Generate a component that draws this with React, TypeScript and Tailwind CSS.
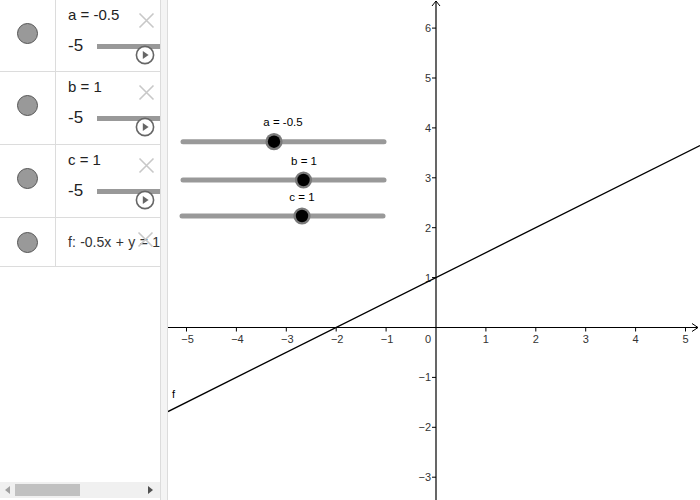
import React from 'react';

interface SliderRow {
  label: string;
  height: string;
}

const sliderRows: SliderRow[] = [
  { label: 'a = -0.5', height: 'h-[73px]' },
  { label: 'b = 1', height: 'h-[73px]' },
  { label: 'c = 1', height: 'h-[73px]' },
];

const UNIT = 49.9;
const OX = 436;
const OY = 327.5;

function Dot() {
  return <div className="w-[21px] h-[21px] rounded-full bg-[#999] border border-[#555]" />;
}

function CloseIcon() {
  return (
    <svg className="absolute right-[5px] top-[12px]" width="17" height="17" viewBox="0 0 17 17">
      <path d="M1.5 1.5 L15.5 15.5 M15.5 1.5 L1.5 15.5" stroke="#c8c8c8" strokeWidth="1.6" fill="none" />
    </svg>
  );
}

function PlayIcon() {
  return (
    <svg className="absolute right-[5px] top-[45px]" width="20" height="20" viewBox="0 0 20 20">
      <circle cx="10" cy="10" r="8.6" fill="white" stroke="#666" strokeWidth="1.6" />
      <path d="M7.8 6 L13.6 10 L7.8 14 Z" fill="#666" />
    </svg>
  );
}

function AlgebraPanel() {
  return (
    <div className="w-[160px] h-full flex flex-col bg-white overflow-hidden" style={{ fontFamily: '"Liberation Sans", Arial, sans-serif' }}>
      {sliderRows.map((row, i) => (
        <div key={row.label} className={`flex ${i === 0 ? 'h-[72px]' : row.height} border-b border-[#dcdcdc]`}>
          <div className="w-[56px] shrink-0 border-r border-[#dcdcdc] flex items-center justify-center pb-[5px]">
            <Dot />
          </div>
          <div className="relative flex-1 overflow-hidden pl-[12px] pt-[6px]">
            <div className="text-[15px] leading-[18px] text-[#222] whitespace-nowrap">{row.label}</div>
            <div className="flex items-center mt-[12px]">
              <span className="text-[17px] leading-[20px] text-[#222] w-[29px]">-5</span>
              <div className="h-[5px] flex-1 bg-[#999] -mr-[2px]" />
            </div>
            <CloseIcon />
            <PlayIcon />
          </div>
        </div>
      ))}
      <div className="flex h-[49px] border-b border-[#dcdcdc]">
        <div className="w-[56px] shrink-0 border-r border-[#dcdcdc] flex items-center justify-center">
          <Dot />
        </div>
        <div className="relative flex-1 overflow-hidden pl-[12px] flex items-center">
          <span className="text-[14px] text-[#333] whitespace-nowrap [word-spacing:0.5px]">f: -0.5x + y = 1</span>
          <svg className="absolute right-[6px] top-[13px]" width="17" height="17" viewBox="0 0 17 17">
            <path d="M1.5 1.5 L15.5 15.5 M15.5 1.5 L1.5 15.5" stroke="#c8c8c8" strokeWidth="1.6" fill="none" />
          </svg>
        </div>
      </div>
      <div className="flex-1" />
      <div className="h-[16px] mb-[2px] bg-[#f0f0f0] flex items-center px-[5px]">
        <svg width="5" height="8" viewBox="0 0 5 8"><path d="M5 0 L0 4 L5 8 Z" fill="#a0a0a0" /></svg>
        <div className="ml-[5px] w-[65px] h-[12px] bg-[#c1c1c1]" />
        <div className="flex-1" />
        <svg width="5" height="8" viewBox="0 0 5 8" className="mr-[2px]"><path d="M0 0 L5 4 L0 8 Z" fill="#505050" /></svg>
      </div>
    </div>
  );
}

function Knob({ x, y }: { x: number; y: number }) {
  return (
    <g>
      <circle cx={x} cy={y} r="8.6" fill="#7a7a7a" />
      <circle cx={x} cy={y} r="6.2" fill="#000" />
    </g>
  );
}

function Graphics() {
  const xs = [-5, -4, -3, -2, -1, 1, 2, 3, 4, 5];
  const ys = [-3, -2, -1, 1, 2, 3, 4, 5, 6];
  const lineY = (px: number) => OY - (0.5 * ((px - OX) / UNIT) + 1) * UNIT;
  const label = (n: number) => (n < 0 ? `\u2212${-n}` : `${n}`);

  return (
    <svg className="flex-1 h-full block" viewBox="168 0 532 500" style={{ fontFamily: '"Liberation Sans", Arial, sans-serif' }}>
      <rect x="168" y="0" width="532" height="500" fill="white" />
      {/* axes */}
      <line x1="168" y1={OY} x2="698" y2={OY} stroke="#000" strokeWidth="1.2" />
      <path d="M692 323.5 L698 327.5 L692 331.5" stroke="#000" strokeWidth="1" fill="none" />
      <line x1={OX} y1="500" x2={OX} y2="1" stroke="#000" strokeWidth="1.2" />
      <path d="M432 6 L436 1 L440 6" stroke="#000" strokeWidth="1" fill="none" />
      {xs.map((n) => {
        const px = OX + n * UNIT;
        return (
          <g key={`x${n}`}>
            <line x1={px} y1={OY} x2={px} y2={OY + 4} stroke="#000" strokeWidth="1" />
            <text x={px + (n < 0 ? 1 : 0)} y={OY + 15} fontSize="11" textAnchor="middle" fill="#333">{label(n)}</text>
          </g>
        );
      })}
      {ys.map((n) => {
        const py = OY - n * UNIT;
        return (
          <g key={`y${n}`}>
            <line x1={OX - 4} y1={py} x2={OX} y2={py} stroke="#000" strokeWidth="1" />
            <text x={OX - 5} y={py + 4} fontSize="11" textAnchor="end" fill="#333">{label(n)}</text>
          </g>
        );
      })}
      <text x="428" y={OY + 15} fontSize="11" textAnchor="middle" fill="#333">0</text>
      {/* f */}
      <line x1="168" y1={lineY(168)} x2="700" y2={lineY(700)} stroke="#000" strokeWidth="1.3" />
      <text x="172" y="398" fontSize="11" fill="#000">f</text>
      {/* sliders */}
      <line x1="183" y1="141.7" x2="384" y2="141.7" stroke="#999" strokeWidth="5" strokeLinecap="round" />
      <text x="283" y="126" fontSize="11.5" textAnchor="middle" fill="#000">a = -0.5</text>
      <Knob x={274} y={141.7} />
      <line x1="183" y1="180" x2="384" y2="180" stroke="#999" strokeWidth="5" strokeLinecap="round" />
      <text x="304" y="165" fontSize="11.5" textAnchor="middle" fill="#000">b = 1</text>
      <Knob x={303.5} y={180} />
      <line x1="182" y1="216" x2="383" y2="216" stroke="#999" strokeWidth="5" strokeLinecap="round" />
      <text x="302" y="201" fontSize="11.5" textAnchor="middle" fill="#000">c = 1</text>
      <Knob x={302} y={216} />
    </svg>
  );
}

export default function App() {
  return (
    <div className="w-[700px] h-[500px] flex bg-white overflow-hidden">
      <AlgebraPanel />
      <div className="w-[8px] h-full bg-[#f4f4f4] border-l border-r border-[#dcdcdc]" />
      <Graphics />
    </div>
  );
}
